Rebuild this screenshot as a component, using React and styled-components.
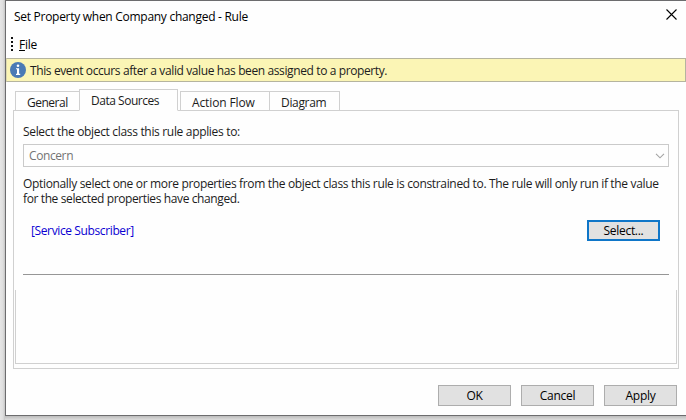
import React from "react";
import styled, { createGlobalStyle } from "styled-components";

const Global = createGlobalStyle`
  * { box-sizing: border-box; }
  body {
    margin: 0;
    background: #fff;
    font: 12px/15px "Open Sans", "Noto Sans", sans-serif;
    color: #1c1c1c;
    overflow: hidden;
  }
`;

const Desktop = styled.div`
  width: 686px;
  height: 420px;
  padding-left: 5px;
  background: linear-gradient(to right, #e6e6e6 0, #dedede 3px, #c4c4c4 5px);
`;

const DropShadow = styled.div`
  height: 420px;
  background: linear-gradient(#b4b4b4 415px, #dcdcdc 420px);
`;

const Window = styled.main`
  display: flex;
  flex-direction: column;
  height: 416px;
  background: #fefefe;
  border: 1px solid #6c6c6e;
  border-right: 0;
`;

const Label = styled.span`
  display: inline-block;
  white-space: pre;
  letter-spacing: ${(p) => p.$track || 0}px;
`;

const TitleBar = styled.header`
  display: flex;
  justify-content: space-between;
  height: 33px;
  padding: 8px 9px 0 8px;
  color: #000;
`;

const MenuBar = styled.nav`
  display: flex;
  gap: 6px;
  height: 24px;
  padding: 3px 0 0 5px;
  color: #000;
`;

const InfoBar = styled.section`
  display: flex;
  align-items: center;
  gap: 4px;
  height: 24px;
  padding: 0 3px;
  background: #fbf5b5;
  border: 1px solid #b5b49f;
  border-left-color: #dcd9b0;
`;

const Tabs = styled.div`
  display: flex;
  align-items: flex-end;
  height: 22px;
  margin: 7px 0 -1px 9px;
  z-index: 1;
`;

const Tab = styled.div`
  width: ${(p) => p.$width}px;
  height: ${(p) => (p.$active ? 22 : 20)}px;
  padding: 3px 0 0 ${(p) => p.$inset}px;
  margin-left: ${(p) => p.$gap || 0}px;
  background: #fefefe;
  border: 1px solid #d0d0d0;
  border-bottom-color: ${(p) => (p.$active ? "#fefefe" : "#d0d0d0")};
`;

const Panel = styled.section`
  display: flex;
  flex-direction: column;
  width: 666px;
  height: 259px;
  margin-left: 7px;
  padding: 13px 1px 4px;
  border: 1px solid #d0d0d0;
`;

const Fields = styled.div`
  display: flex;
  flex-direction: column;
  width: 646px;
  margin-left: 8px;
`;

const ComboBox = styled.div`
  display: flex;
  align-items: center;
  justify-content: space-between;
  height: 23px;
  margin: 5px 0 9px;
  padding: 0 3px 0 5px;
  color: #747474;
  border: 1px solid #cacaca;
`;

const SelectionRow = styled.div`
  display: flex;
  justify-content: space-between;
  align-items: center;
  height: 21px;
  margin: 14px 9px 0 8px;
`;

const Link = styled(Label)`
  color: #0a00d2;
`;

const Rule = styled.div`
  height: 1px;
  margin-top: 33px;
  background: #969696;
`;

const EmptyBox = styled.div`
  height: 74px;
  margin-top: 15px;
  border: 1px solid #d0d0d0;
  border-top: 0;
`;

const Button = styled.button`
  width: 73px;
  height: 21px;
  padding: 0;
  font: inherit;
  color: #000;
  background: #e1e1e1;
  border: ${(p) => (p.$focused ? "2px solid #0f76c8" : "1px solid #adadad")};
`;

const Footer = styled.footer`
  display: flex;
  justify-content: flex-end;
  gap: 10px;
  margin: 16px 9px 0 0;
`;

const CloseIcon = () => (
  <svg width="11" height="11" viewBox="0 0 11 11">
    <path d="M.5.5l10 10M10.5.5l-10 10" stroke="#000" strokeWidth="1.1" />
  </svg>
);

const Grip = () => (
  <svg width="2" height="15" viewBox="0 0 2 15">
    <path d="M0 0h2v2H0zM0 4h2v2H0zM0 8h2v2H0zM0 12h2v2H0z" fill="#111" />
  </svg>
);

const InfoIcon = () => (
  <svg width="16" height="16" viewBox="0 0 16 16">
    <circle cx="8" cy="8" r="8" fill="#4a7ab5" />
    <circle cx="8" cy="3.8" r="1.3" fill="#fff" />
    <path d="M6 6.2h3.1v5.6h1.1V13H6v-1.2h1V7.3H6z" fill="#fff" />
  </svg>
);

const Chevron = () => (
  <svg width="10" height="6" viewBox="0 0 10 6">
    <path d="M1 .8L5 4.8 9 .8" fill="none" stroke="#a4a4a4" strokeWidth="1.1" />
  </svg>
);

export default function App() {
  return (
    <Desktop>
      <Global />
      <DropShadow>
        <Window>
          <TitleBar>
            <Label $track={-0.28}>Set Property when Company changed - Rule</Label>
            <CloseIcon />
          </TitleBar>
          <MenuBar>
            <Grip />
            <Label $track={-0.25}><u>F</u>ile</Label>
          </MenuBar>
          <InfoBar>
            <InfoIcon />
            <Label $track={-0.386}>This event occurs after a valid value has been assigned to a property.</Label>
          </InfoBar>
          <Tabs>
            <Tab $width={65} $inset={11}><Label $track={-0.5}>General</Label></Tab>
            <Tab $active $width={99} $inset={11} $gap={-1}><Label $track={-0.48}>Data Sources</Label></Tab>
            <Tab $width={90} $inset={11} $gap={2}><Label $track={-0.12}>Action Flow</Label></Tab>
            <Tab $width={71} $inset={11} $gap={-1}><Label $track={-0.33}>Diagram</Label></Tab>
          </Tabs>
          <Panel>
            <Fields>
              <Label $track={-0.325}>Select the object class this rule applies to:</Label>
              <ComboBox>
                <Label $track={-0.4}>Concern</Label>
                <Chevron />
              </ComboBox>
              <Label $track={-0.337}>Optionally select one or more properties from the object class this rule is constrained to. The rule will only run if the value</Label>
              <Label $track={-0.385}>for the selected properties have changed.</Label>
              <SelectionRow>
                <Link $track={-0.38}>[Service Subscriber]</Link>
                <Button $focused><Label $track={-0.3}>Select...</Label></Button>
              </SelectionRow>
              <Rule />
            </Fields>
            <EmptyBox />
          </Panel>
          <Footer>
            <Button><Label $track={-0.3}>OK</Label></Button>
            <Button><Label $track={-0.25}>Cancel</Label></Button>
            <Button><Label $track={-0.3}>Apply</Label></Button>
          </Footer>
        </Window>
      </DropShadow>
    </Desktop>
  );
}
